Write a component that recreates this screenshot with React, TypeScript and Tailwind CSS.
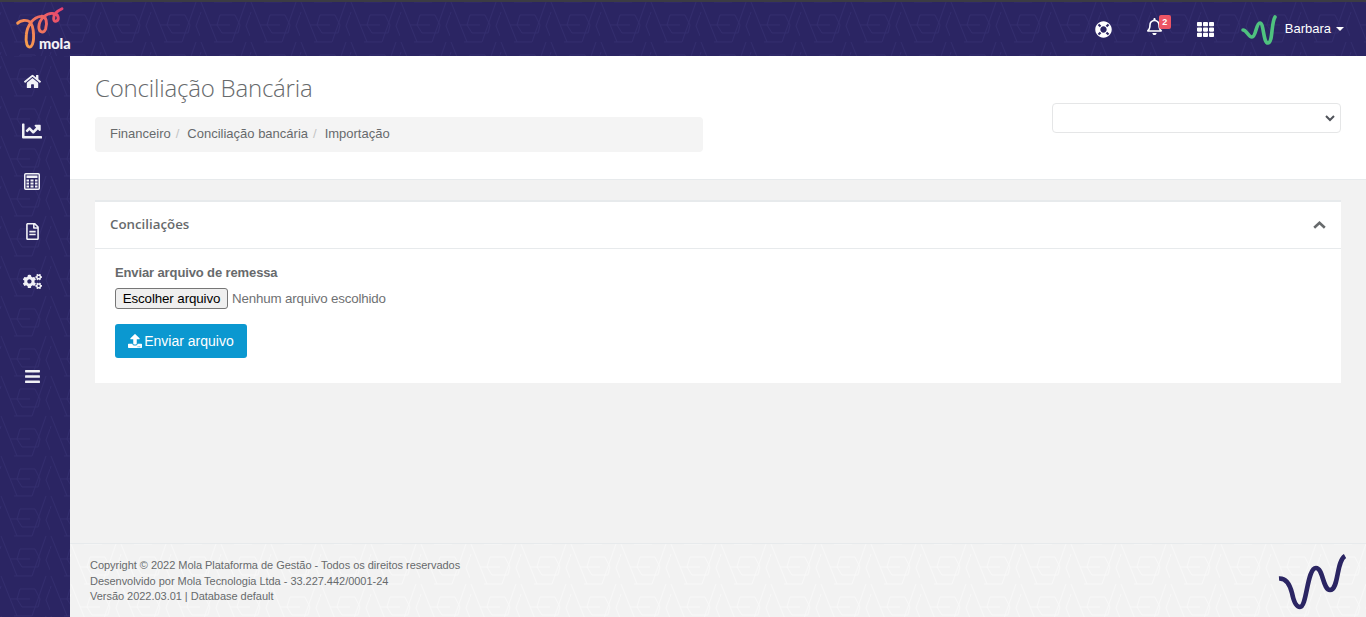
import React from "react";
import { FaHome, FaChartLine, FaRegFileAlt, FaCogs, FaBars, FaLifeRing, FaRegBell, FaTh, FaUpload } from "react-icons/fa";

function Pattern({ id, color }: { id: string; color: string }) {
  return (
    <svg className="absolute inset-0 w-full h-full pointer-events-none" aria-hidden="true">
      <defs>
        <pattern id={id} width="50" height="40" patternUnits="userSpaceOnUse">
          <path
            d="M1 0 L17 40 M46 0 L32 40 M20 13 H35 L40 23 L38 31 H22 L17 23 Z M10 23 H30 M14 40 H32 M32 0 H14 M0 13 L1 10 M50 13 L46 24 L50 34"
            fill="none"
            stroke={color}
            strokeWidth="1"
          />
        </pattern>
      </defs>
      <rect width="100%" height="100%" fill={`url(#${id})`} />
    </svg>
  );
}

function Calculator() {
  return (
    <svg width="16" height="17" viewBox="0 0 16 17" fill="none">
      <rect x="0.75" y="0.75" width="14.5" height="15.5" rx="1" stroke="#f1f1f6" strokeWidth="1.5" />
      <rect x="2.5" y="2.5" width="11" height="2.5" fill="#f1f1f6" />
      <path d="M2.5 6.5h2.5v2H2.5zM6.5 6.5h3v2h-3zM11 6.5h2.5v2H11zM2.5 9.5h2.5v2H2.5zM6.5 9.5h3v2h-3zM11 9.5h2.5v2H11zM2.5 12.5h2.5v2H2.5zM6.5 12.5h3v2h-3zM11 12.5h2.5v2H11z" fill="#f1f1f6" />
    </svg>
  );
}

export default function App() {
  return (
    <div className="h-[617px] w-full overflow-hidden flex flex-col bg-[#f2f2f2] text-[#676a6c] font-['Liberation_Sans',sans-serif]">
      <header className="relative h-14 shrink-0 bg-[#2b2563] border-t-2 border-[#3c3c44] flex items-center">
        <Pattern id="p1" color="#332d6e" />
        <div className="relative w-[70px] h-full">
          <svg width="70" height="54" viewBox="0 0 70 56" fill="none" className="absolute left-0 top-[-2px]">
            <defs>
              <linearGradient id="lg" gradientUnits="userSpaceOnUse" x1="17" y1="40" x2="63" y2="10">
                <stop offset="0" stopColor="#f9a64a" />
                <stop offset="0.5" stopColor="#ef7060" />
                <stop offset="1" stopColor="#e6406f" />
              </linearGradient>
            </defs>
            <path
              d="M17 24 C20 21 26 20 30 23 C34 27 35 44 31 48 C27 51 25 44 26 36 C27 26 33 18 41 17 C47 16 48 24 46 30 C44 35 39 34 39 28 C39 20 47 13 54 14 C59 14 61 20 57 22 C53 23 54 16 57 13 C59 11 61 10 63 9"
              stroke="url(#lg)"
              strokeWidth="3"
              strokeLinecap="round"
            />
          </svg>
          <span className="absolute left-[39px] top-[34px] text-[14.5px] leading-4 font-black text-[#f4f1f6] font-['Lato',sans-serif]">mola</span>
        </div>
        <div className="relative ml-auto flex items-center h-full text-white">
          <div className="w-[17px] flex justify-center"><FaLifeRing className="text-[17px]" /></div>
          <div className="relative ml-[34px] w-[17px] -mt-[5px]">
            <FaRegBell className="text-[17px]" />
            <span className="absolute left-[13px] top-[-3px] w-3 h-[14px] rounded-[2px] bg-[#ed5565] text-white text-[9px] leading-[14px] font-bold text-center">2</span>
          </div>
          <FaTh className="ml-[34px] text-[17px]" />
          <svg width="38" height="32" viewBox="0 0 38 32" fill="none" className="ml-[26px]">
            <path d="M3 17 C7 17 8 24 12 24 C16 24 16 10 20 10 C24 10 23 30 28 30 C33 30 31 10 35 4" stroke="#4fc27f" strokeWidth="3.6" strokeLinecap="round" />
          </svg>
          <span className="ml-[7px] text-[13px]">Barbara</span>
          <span className="ml-[5px] mr-[22px] w-0 h-0 border-x-[4px] border-x-transparent border-t-[4px] border-t-white" />
        </div>
      </header>
      <div className="flex-1 flex min-h-0">
        <aside className="relative w-[70px] shrink-0 bg-[#2b2563]">
          <Pattern id="p2" color="#332d6e" />
          <div className="relative flex flex-col items-center text-[#f1f1f6] pr-[6px]">
            <div className="h-[50px] flex items-center justify-center"><FaHome className="text-[17px]" /></div>
            <div className="h-[50px] flex items-center justify-center"><FaChartLine className="text-[20px]" /></div>
            <div className="h-[50px] flex items-center justify-center"><Calculator /></div>
            <div className="h-[50px] flex items-center justify-center"><FaRegFileAlt className="text-[17px]" /></div>
            <div className="h-[50px] flex items-center justify-center"><FaCogs className="text-[19px]" /></div>
            <div className="h-[95px] pt-[45px] flex items-center justify-center"><FaBars className="text-[17px]" /></div>
          </div>
        </aside>
        <main className="flex-1 min-w-0 flex flex-col">
          <section className="h-[124px] shrink-0 bg-white border-b border-[#e7eaec] flex justify-between px-[25px]">
            <div className="w-[608px]">
              <h1 className="mt-[18px] text-[24px] leading-[28px] font-light tracking-[-0.2px] text-[#676a6c] font-['Open_Sans',sans-serif]">Conciliação Bancária</h1>
              <nav className="mt-[15px] h-[35px] rounded-[4px] bg-[#f4f4f4] flex items-center px-[15px] text-[13px] pb-[2px]">
                <span>Financeiro</span>
                <span className="px-[5px] text-[#c4c4c4]">/</span>
                <span className="ml-[3px]">Conciliação bancária</span>
                <span className="px-[5px] text-[#c4c4c4]">/</span>
                <span className="ml-[3px]">Importação</span>
              </nav>
            </div>
            <div className="mt-[47px] w-[289px] h-[30px] rounded-[4px] border border-[#e5e6e7] bg-white flex items-center justify-end pr-[5px]">
              <svg width="10" height="8" viewBox="0 0 10 8" fill="none"><path d="M1 2 L5 6 L9 2" stroke="#50535a" strokeWidth="2" /></svg>
            </div>
          </section>
          <section className="flex-1 px-[25px] pt-[20px]">
            <div className="bg-white border-t-2 border-[#e7eaec]">
              <div className="h-[47px] border-b border-[#e7eaec] flex items-center justify-between pl-[15px] pr-[15px]">
                <h5 className="text-[13.3px] font-semibold text-[#676a6c] font-['Open_Sans',sans-serif] pb-[1px]">Conciliações</h5>
                <svg width="13" height="8" viewBox="0 0 13 8" fill="none"><path d="M1.2 6.8 L6.5 1.8 L11.8 6.8" stroke="#676a6c" strokeWidth="2.6" /></svg>
              </div>
              <div className="pl-[20px] pt-[15px] h-[134px]">
                <div className="text-[13px] leading-[17px] font-bold tracking-[-0.12px]">Enviar arquivo de remessa</div>
                <div className="mt-[7px] flex items-center h-[21px]">
                  <span className="h-[21px] w-[113px] rounded-[3px] border border-[#767676] bg-[#efefef] text-black text-[13.33px] tracking-[-0.1px] flex items-center justify-center">Escolher arquivo</span>
                  <span className="ml-[4px] text-[13.33px] tracking-[-0.17px] text-[#6f7173]">Nenhum arquivo escolhido</span>
                </div>
                <button className="mt-[15px] h-[34px] w-[132px] rounded-[3px] bg-[#0b98d0] text-white text-[14px] flex items-center justify-center gap-[2px]">
                  <FaUpload className="text-[14px]" />
                  <span>Enviar arquivo</span>
                </button>
              </div>
            </div>
          </section>
          <footer className="relative h-[74px] shrink-0 bg-[#f2f2f2] border-t border-[#e7eaec] pl-[20px] pt-[14px] text-[11px] leading-[15.5px] tracking-[-0.03px] text-[#676a6c]">
            <Pattern id="p3" color="#f8f8f8" />
            <div className="relative">
              <div>Copyright © 2022 Mola Plataforma de Gestão - Todos os direitos reservados</div>
              <div>Desenvolvido por Mola Tecnologia Ltda - 33.227.442/0001-24</div>
              <div>Versão 2022.03.01 | Database default</div>
            </div>
            <svg width="74" height="58" viewBox="0 0 74 58" fill="none" className="absolute right-[18px] top-[9px]">
              <path d="M5 25.5 C13 25 16 32 18 40 C20 50 23 54 26 54 C33 54 33 15 42 15 C49 15 49 37 56 37 C65 37 62 8 71 3" stroke="#2b2563" strokeWidth="4.6" />
            </svg>
          </footer>
        </main>
      </div>
    </div>
  );
}
